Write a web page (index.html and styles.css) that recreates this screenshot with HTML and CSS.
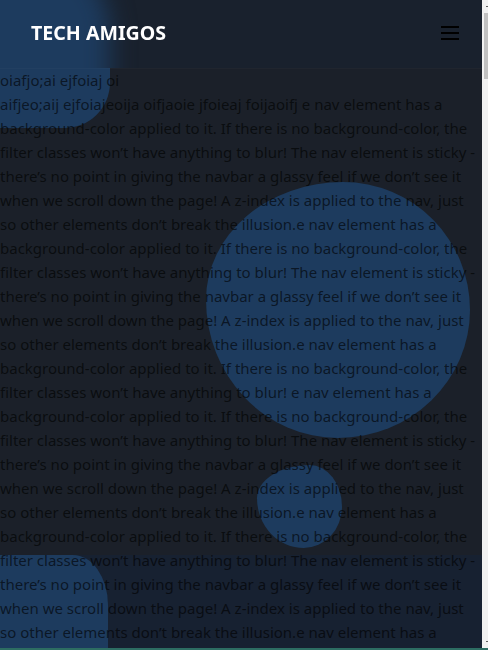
FILE: index.html
```html
<!DOCTYPE html>
<html lang="en">
<head>
<meta charset="utf-8">
<title>Tech Amigos</title>
<link rel="stylesheet" href="styles.css">
</head>
<body>
<div class="window">
  <div class="page">
    <div class="blob blob-top"></div>
    <div class="blob blob-mid"></div>
    <div class="blob blob-small"></div>
    <div class="blob blob-bottom"></div>

    <nav class="nav">
      <a class="brand" href="#">TECH AMIGOS</a>
      <button class="menu" aria-label="Menu"><span></span><span></span><span></span></button>
    </nav>

    <main class="content">
      <p>oiafjo;ai ejfoiaj oi</p>
      <p>aifjeo;aij ejfoiajeoija oifjaoie jfoieaj foijaoifj e nav element has a background-color applied to it. If there is no background-color, the filter classes won’t have anything to blur! The nav element is sticky - there’s no point in giving the navbar a glassy feel if we don’t see it when we scroll down the page! A z-index is applied to the nav, just so other elements don’t break the illusion.e nav element has a background-color applied to it. If there is no background-color, the filter classes won’t have anything to blur! The nav element is sticky - there’s no point in giving the navbar a glassy feel if we don’t see it when we scroll down the page! A z-index is applied to the nav, just so other elements don’t break the illusion.e nav element has a background-color applied to it. If there is no background-color, the filter classes won’t have anything to blur! e nav element has a background-color applied to it. If there is no background-color, the filter classes won’t have anything to blur! The nav element is sticky - there’s no point in giving the navbar a glassy feel if we don’t see it when we scroll down the page! A z-index is applied to the nav, just so other elements don’t break the illusion.e nav element has a background-color applied to it. If there is no background-color, the filter classes won’t have anything to blur! The nav element is sticky - there’s no point in giving the navbar a glassy feel if we don’t see it when we scroll down the page! A z-index is applied to the nav, just so other elements don’t break the illusion.e nav element has a background-color applied to it. If there is no background-color, the filter classes won’t have anything to blur! e nav element has a background-color applied to it. If there is no background-color, the filter classes won’t have anything to blur! The nav element is sticky - there’s no point in giving the navbar a glassy feel if we don’t see it when we scroll down the page! A z-index is applied to the nav, just so other elements don’t break the illusion.e nav element has a background-color applied to it. If there is no background-color, the filter classes won’t have anything to blur! The nav element is sticky - there’s no point in giving the navbar a glassy feel if we don’t see it when we scroll down the page! A z-index is applied to the nav, just so other elements don’t break the illusion.</p>
    </main>
  </div>
  <div class="scrollbar" aria-hidden="true">
    <div class="sb-btn"><span></span></div>
    <div class="sb-track"><div class="sb-thumb"></div></div>
    <div class="sb-btn"><span></span></div>
  </div>
</div>
<div class="edge" aria-hidden="true"></div>
</body>
</html>
```
FILE: styles.css
```css
html, body {
  margin: 0;
  padding: 0;
  height: 100%;
  overflow: hidden;
}

body {
  display: flex;
  flex-direction: column;
  font-family: "Noto Sans", "Open Sans", sans-serif;
  font-size: 15px;
  line-height: 24px;
  color: rgba(0, 0, 0, 0.62);
  background: #172131;
}

.window {
  flex: 1;
  min-height: 0;
  display: flex;
}

/* thin bottom edge of the window */
.edge {
  height: 2px;
  background: #2d6d62;
}

/* scrolling page area */
.page {
  position: relative;
  flex: 1;
  min-width: 0;
  overflow-y: auto;
  overflow-x: hidden;
  background: linear-gradient(to bottom, #1b2029 555px, #172131 555px);
  background-attachment: local;
}

/* thin scrollbar strip */
.scrollbar {
  width: 6px;
  display: flex;
  flex-direction: column;
  background: #f1f1f1;
}
.sb-btn {
  height: 13px;
  display: flex;
  justify-content: flex-end;
  align-items: flex-start;
  padding-top: 6px;
  box-sizing: border-box;
}
.sb-btn span {
  width: 2px;
  height: 1px;
  background: #606060;
}
.sb-track {
  flex: 1;
}
.sb-thumb {
  height: 66px;
  margin-left: 2px;
  background: #c1c1c1;
}

/* decorative blobs */
.blob {
  position: absolute;
  z-index: 0;
  background: #1d3b5e;
}
.blob-top {
  left: -70px;
  top: -50px;
  width: 180px;
  height: 178px;
  border-radius: 60% 50% 50px 70px / 60% 50% 50px 70px;
}
.blob-mid {
  left: 206px;
  top: 182px;
  width: 264px;
  height: 256px;
  border-radius: 52% 48% 50% 50% / 46% 50% 50% 54%;
}
.blob-small {
  left: 257px;
  top: 465px;
  width: 85px;
  height: 83px;
  border-radius: 62% 38% 45% 55% / 40% 50% 50% 60%;
}
.blob-bottom {
  left: -100px;
  top: 555px;
  width: 208px;
  height: 200px;
  border-radius: 0 35px 50% 0 / 0 50px 50% 0;
}

/* glassy navbar */
.nav {
  position: sticky;
  top: 0;
  z-index: 2;
  height: 68px;
  box-sizing: border-box;
  padding: 0 23px 3px 31px;
  display: flex;
  align-items: center;
  justify-content: space-between;
  overflow: hidden;
  background: #19212d;
  box-shadow: 0 1px 0 rgba(255, 255, 255, 0.025);
}
/* the blurred part of the top blob seen through the glass */
.nav::before {
  content: "";
  position: absolute;
  left: -70px;
  top: -50px;
  width: 180px;
  height: 178px;
  border-radius: 60% 50% 50px 70px / 60% 50% 50px 70px;
  background: #1d3b5e;
  filter: blur(12px);
}

.brand {
  position: relative;
  font-family: "Noto Sans", "Open Sans", sans-serif;
  font-weight: 700;
  font-size: 19.6px;
  line-height: 1;
  color: #ffffff;
  text-decoration: none;
}

.menu {
  position: relative;
  display: flex;
  flex-direction: column;
  gap: 4px;
  width: 18px;
  padding: 0;
  border: 0;
  background: transparent;
  cursor: pointer;
}
.menu span {
  display: block;
  height: 2px;
  width: 18px;
  background: #000;
}

/* content */
.content {
  position: relative;
  z-index: 1;
}
.content p {
  margin: 0;
}
```
